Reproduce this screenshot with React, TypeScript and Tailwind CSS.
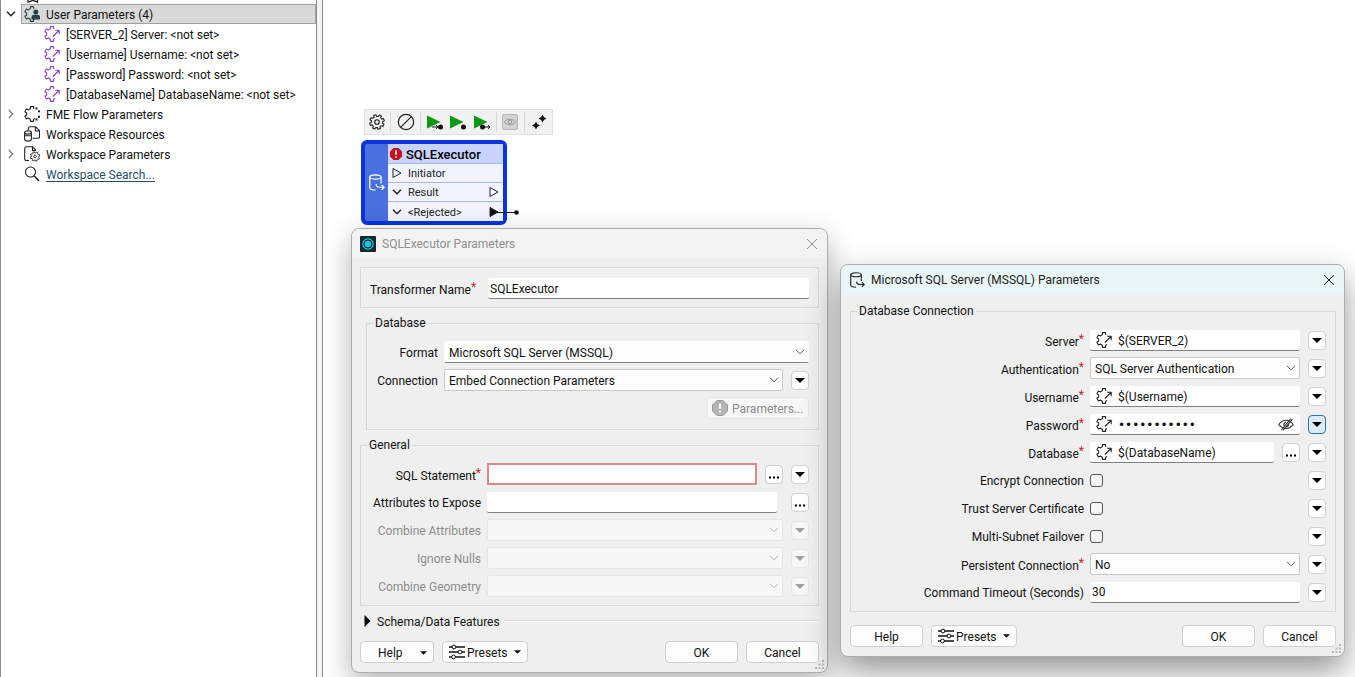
import type { ReactNode } from "react";

const ring = (cx: number, cy: number, ro: number, ri: number, teeth: number, from: number, to: number) => {
  const step = 360 / teeth;
  const pts: string[] = [];
  const at = (r: number, a: number) => {
    const t = (a * Math.PI) / 180;
    pts.push(`${(cx + r * Math.cos(t)).toFixed(2)} ${(cy + r * Math.sin(t)).toFixed(2)}`);
  };
  for (let a = from; a < to - 1; a += step) {
    at(ri, a);
    at(ri, a + step * 0.3);
    at(ro, a + step * 0.4);
    at(ro, a + step * 0.8);
    at(ri, a + step * 0.92);
  }
  return "M" + pts.join("L");
};

const GEAR_FULL = ring(8, 8, 7.4, 5.6, 8, 0, 360) + "Z";
const GEAR_OPEN = ring(8, 8, 7.5, 5.4, 6, 54, 292);
const GEAR_SMALL = ring(11, 10.5, 4.8, 3.7, 8, 0, 360) + "Z";

function Svg({ children, className = "size-4" }: { children: ReactNode; className?: string }) {
  return (
    <svg
      viewBox="0 0 16 16"
      className={`shrink-0 ${className}`}
      fill="none"
      stroke="currentColor"
      strokeWidth="1.1"
      strokeLinejoin="round"
      aria-hidden="true"
    >
      {children}
    </svg>
  );
}

function LinkedGear({ className }: { className?: string }) {
  return (
    <Svg className={className}>
      <path d={GEAR_OPEN} />
      <path d="M8.800 10.500 15 4.500M11.200 4.200H15.200V8.200" />
    </Svg>
  );
}

function DatabaseIcon({ className }: { className?: string }) {
  return (
    <Svg className={className}>
      <ellipse cx="7" cy="2.8" rx="5.3" ry="2" />
      <path d="M1.7 2.8V13c0 1.3 2 2.2 5.3 2.2M12.3 2.8V9M7.5 9.6c.3 2.2 1.6 2.9 3.2 2.9H15M12.8 10.2l2.4 2.3-2.4 2.3" />
    </Svg>
  );
}

function Sliders() {
  return (
    <svg viewBox="0 0 16 16" className="size-4 shrink-0" fill="#fdfdfd" stroke="#111" strokeWidth="1.5" aria-hidden="true">
      <path d="M0 3H16M0 8H16M0 13H16" />
      <g strokeWidth="1">
        <circle cx="5" cy="3" r="1.9" />
        <circle cx="11" cy="8" r="1.9" />
        <circle cx="4.5" cy="13" r="1.9" />
      </g>
    </svg>
  );
}

function Caret({ className = "h-[5px] w-2.5" }: { className?: string }) {
  return (
    <svg viewBox="0 0 10 5" className={className} fill="currentColor" aria-hidden="true">
      <path d="M0 0H10L5 5Z" />
    </svg>
  );
}

function Chevron({ className, bold }: { className?: string; bold?: boolean }) {
  return (
    <svg viewBox="0 0 10 6" className={className} fill="none" stroke="currentColor" strokeWidth={bold ? 1.5 : 1} aria-hidden="true">
      <path d="M1 .8 5 4.8 9 .8" />
    </svg>
  );
}

function MiniButton({ label, dots, disabled, active }: { label: string; dots?: boolean; disabled?: boolean; active?: boolean }) {
  const tone = active
    ? "border-[#2a76ab] bg-[#dcebf8] text-black"
    : disabled
      ? "border-[#e6e6e6] bg-[#f6f6f6] text-[#a0a0a0]"
      : "border-[#d0d0d0] bg-[#fdfdfd] text-black";
  return (
    <button
      type="button"
      aria-label={label}
      disabled={disabled}
      className={`flex h-[19px] w-[18px] shrink-0 items-center justify-center rounded border ${tone}`}
    >
      {dots ? (
        <svg viewBox="0 0 10 10" className="size-2.5" fill="currentColor" aria-hidden="true">
          <path d="M0 7.5h2v2H0zM4 7.5h2v2H4zM8 7.5h2v2H8z" />
        </svg>
      ) : (
        <Caret />
      )}
    </button>
  );
}

function Picker({ id, value, disabled, flat }: { id: string; value: string; disabled?: boolean; flat?: boolean }) {
  const tone = disabled
    ? "border-[#e6e6e6] bg-[#f7f7f7]"
    : flat
      ? "border-transparent border-b-[#808080] bg-[#fdfdfd]"
      : "border-[#c8c8c8] bg-[#fdfdfd]";
  return (
    <div className="relative flex min-w-0 flex-1">
      <select id={id} disabled={disabled} className={`h-[22px] w-full appearance-none rounded-xs border px-1 pt-px ${tone}`}>
        <option>{value}</option>
      </select>
      <Chevron className={`pointer-events-none absolute top-2 right-1 h-1.5 w-2.5 ${disabled ? "text-[#b5b5b5]" : "text-[#555]"}`} />
    </div>
  );
}

const Star = () => <span className="align-[3px] text-[12px] leading-none text-[#c0282d]">*</span>;

function Row({ id, label, required, labelWidth, muted, children }: {
  id: string;
  label: string;
  required?: boolean;
  labelWidth: string;
  muted?: boolean;
  children: ReactNode;
}) {
  return (
    <div className="flex h-7 items-center">
      <label htmlFor={id} className={`shrink-0 pt-0.5 text-right whitespace-nowrap ${labelWidth} ${muted ? "text-[#8c8c8c]" : ""}`}>
        {label}
        {required && <Star />}
      </label>
      <div className="ml-1.5 flex min-w-0 flex-1 items-center gap-2">{children}</div>
    </div>
  );
}

const fieldLook = "h-[21px] w-full min-w-0 rounded-xs border-b border-[#808080] bg-white";

function ParamField({ id, value, secret }: { id: string; value: string; secret?: boolean }) {
  return (
    <div className={`flex flex-1 items-center ${fieldLook}`}>
      <LinkedGear className="ml-1.5 size-4 text-[#222]" />
      <input
        id={id}
        type={secret ? "password" : "text"}
        defaultValue={value}
        className={`ml-1.5 min-w-0 flex-1 bg-transparent pt-0.5 outline-none ${secret ? "font-['DejaVu_Sans',sans-serif]" : ""}`}
      />
      {secret && (
        <Svg className="mr-1.5 size-4 text-[#333]">
          <path d="M.8 8.6C3 5.4 5.600 4.300 8 4.300s5 1.100 7.200 4.300C13 11.200 10.500 12.400 8 12.400S3 11.200.8 8.600Z" />
          <path d="M12.800 2.500 3.500 14M14.300 3.200 5 14.500M10.300 7.200c.8 1.800-.3 3.500-2 3.500M6 9.800C5.400 8 6.400 6.400 8.200 6.300" />
        </Svg>
      )}
    </div>
  );
}

const pushLook = "flex h-[22px] items-center rounded border border-[#d0d0d0] bg-[#fdfdfd]";

function PushButton({ children }: { children: ReactNode }) {
  return (
    <button type="button" className={`w-[73px] justify-center pt-px ${pushLook}`}>
      {children}
    </button>
  );
}

function PresetsButton() {
  return (
    <button type="button" className={`w-[86px] px-1.5 ${pushLook}`}>
      <Sliders />
      <span className="ml-0.5 pt-px">Presets</span>
      <Caret className="ml-auto h-1 w-[7px]" />
    </button>
  );
}

function Grip() {
  return (
    <svg viewBox="0 0 10 10" className="absolute right-0.5 bottom-0.5 size-2.5" fill="#b8b8b8" aria-hidden="true">
      <path d="M7 0h2v2H7zM7 3.500h2v2H7zM7 7h2v2H7zM3.500 3.500h2v2h-2zM3.500 7h2v2h-2zM0 7h2v2H0z" />
    </svg>
  );
}

function CloseIcon() {
  return (
    <svg viewBox="0 0 12 12" className="size-3" fill="none" stroke="currentColor" aria-hidden="true">
      <path d="M1 1 11 11M11 1 1 11" />
    </svg>
  );
}

function TreeRow({ arrow, icon, children, selected, nested }: {
  arrow?: "open" | "closed";
  icon: ReactNode;
  children: ReactNode;
  selected?: boolean;
  nested?: boolean;
}) {
  return (
    <li className="flex h-5 items-center">
      <span className="flex w-5 shrink-0 justify-center">
        {arrow && <Chevron bold className={`h-1.5 w-2.5 ${arrow === "open" ? "text-[#222]" : "-rotate-90 text-[#888]"}`} />}
      </span>
      <div
        className={`flex h-5 flex-1 items-center gap-1.5 border pl-0.5 ${selected ? "border-[#a0a0a0] bg-[#d9d9d9]" : "border-transparent"} ${nested ? "ml-5" : ""}`}
      >
        {icon}
        <span className="pt-0.5">{children}</span>
      </div>
    </li>
  );
}

const userParams = [
  "[SERVER_2] Server: <not set>",
  "[Username] Username: <not set>",
  "[Password] Password: <not set>",
  "[DatabaseName] DatabaseName: <not set>",
];

function Navigator() {
  return (
    <aside className="flex w-[323px] shrink-0 border-r border-l border-[#8c8c8c] bg-[#f3f3f3]">
      <ul className="mr-[5px] flex-1 border-r border-[#8c8c8c] bg-white">
        <li className="flex h-1 items-end overflow-hidden pl-[26px]">
          <svg viewBox="0 0 12 4" className="h-1 w-3" fill="none" stroke="#222" strokeWidth="1.3" aria-hidden="true">
            <path d="M1 0V2L6 .3 10.500 2V0" />
          </svg>
        </li>
        <TreeRow
          arrow="open"
          selected
          icon={
            <Svg className="size-4 text-[#26434b]">
              <path d={GEAR_OPEN} />
              <g fill="currentColor" stroke="none">
                <circle cx="11.800" cy="6" r="2.500" />
                <path d="M7.500 13.500V11c0-1.500 1-2.300 2.500-2.300h3.500c1.500 0 2.500.8 2.500 2.300v2.500Z" />
              </g>
            </Svg>
          }
        >
          User Parameters (4)
        </TreeRow>
        {userParams.map((p) => (
          <TreeRow key={p} nested icon={<LinkedGear className="size-4 text-[#8a3fc0]" />}>
            {p}
          </TreeRow>
        ))}
        <TreeRow
          arrow="closed"
          icon={
            <Svg className="size-4 text-[#222]">
              <path d={GEAR_OPEN} />
              <g fill="currentColor" stroke="none">
                <path d="M11.500 1.500h2v2h-2zM14 4.300h2v2h-2zM14 9.800h2v2h-2zM11.500 12.500h2v2h-2z" />
              </g>
            </Svg>
          }
        >
          FME Flow Parameters
        </TreeRow>
        <TreeRow
          icon={
            <Svg className="size-4 text-[#222]">
              <path d="M4.500 4V2c0-.8.500-1.300 1.300-1.300h5.700l4 4V11c0 .8-.5 1.300-1.300 1.300H8.500M11.300.8V5h4" />
              <ellipse cx="4" cy="6.500" rx="3.400" ry="1.600" />
              <path d="M.6 6.500v6.800c0 1 1.500 1.800 3.400 1.800s3.400-.8 3.400-1.800V6.500M.6 9.800h6.800" />
            </Svg>
          }
        >
          Workspace Resources
        </TreeRow>
        <TreeRow
          arrow="closed"
          icon={
            <Svg className="size-4 text-[#222]">
              <path d="M5 14.500H2.500C1.300 14.500.7 14 .7 12.800V2.500C.7 1.300 1.300.8 2.500.8h6l3.500 3.500M8.500.8v3.700H12" />
              <path d={GEAR_SMALL} strokeWidth=".9" />
              <circle cx="11" cy="10.500" r="1.300" strokeWidth=".9" />
            </Svg>
          }
        >
          Workspace Parameters
        </TreeRow>
        <TreeRow
          icon={
            <Svg className="size-4 text-[#222]">
              <circle cx="6.500" cy="6" r="5" />
              <path d="M10 9.800 15 15" strokeWidth="1.600" />
            </Svg>
          }
        >
          <a href="#search" className="text-[#24505f] underline underline-offset-2">
            Workspace Search...
          </a>
        </TreeRow>
      </ul>
    </aside>
  );
}

function RunIcon({ kind }: { kind: "to" | "here" | "from" }) {
  return (
    <svg viewBox="0 0 18 16" className="h-4 w-[18px]" aria-hidden="true">
      <path d="M1 1.500 14.500 8 1 14.500Z" fill="#0a9a12" />
      {kind === "to" && <path d="M6 13h6M10 11.200 12 13l-2 1.800" stroke="#111" fill="none" />}
      {kind === "from" && <path d="M11 13h6M15 11.200 17 13l-2 1.800" stroke="#111" fill="none" />}
      <circle cx={kind === "from" ? 9.5 : 14.5} cy="13" r="2.500" fill="#111" />
    </svg>
  );
}

function NodeToolbar() {
  const tool = "flex items-center justify-center";
  const bar = <span className="h-5 w-px bg-[#d8d8d8]" />;
  return (
    <div className="absolute top-[109px] left-[41px] flex h-[26px] w-[189px] items-center justify-between border border-[#e0e0e0] bg-[#f1f1f1] px-1">
      <button type="button" aria-label="Parameters" className={tool}>
        <Svg className="size-4 text-[#222]">
          <path d={GEAR_FULL} />
          <circle cx="8" cy="8" r="2.300" />
        </Svg>
      </button>
      {bar}
      <button type="button" aria-label="Disable" className={tool}>
        <Svg className="size-[18px] text-[#222]">
          <circle cx="8" cy="8" r="6.800" />
          <path d="M3.200 12.800 12.800 3.200" />
        </Svg>
      </button>
      {bar}
      <button type="button" aria-label="Run to this" className={tool}><RunIcon kind="to" /></button>
      <button type="button" aria-label="Run just this" className={tool}><RunIcon kind="here" /></button>
      <button type="button" aria-label="Run from this" className={tool}><RunIcon kind="from" /></button>
      {bar}
      <button type="button" aria-label="Inspect" disabled className="flex size-4 items-center justify-center rounded-xs border border-[#b5b5b5] bg-[#d2d2d2]">
        <Svg className="size-3.5 text-[#999]">
          <path d="M1.500 8C4 4 12 4 14.500 8 12 12 4 12 1.500 8Z" />
          <circle cx="8" cy="8" r="2" />
        </Svg>
      </button>
      {bar}
      <button type="button" aria-label="Assist" className={tool}>
        <svg viewBox="0 0 18 18" className="size-[18px]" fill="#111" aria-hidden="true">
          <path d="M12.500 1.500q.8 3.200 4 4-3.200.8-4 4-.8-3.200-4-4 3.200-.8 4-4ZM6 8.500q.8 3.200 4 4-3.200.8-4 4-.8-3.200-4-4 3.200-.8 4-4Z" />
        </svg>
      </button>
    </div>
  );
}

function Port({ filled }: { filled?: boolean }) {
  return (
    <svg viewBox="0 0 10 10" className="size-2.5 shrink-0" fill={filled ? "#111" : "none"} stroke="#222" aria-hidden="true">
      <path d="M1 .5 9 5 1 9.500Z" />
    </svg>
  );
}

function TransformerNode() {
  return (
    <div className="absolute top-[140px] left-[38px] flex h-[85px] w-[146px] rounded-md border-4 border-[#0b33df] bg-[#4a70e0]">
      <div className="flex w-[23px] items-center justify-center">
        <DatabaseIcon className="size-[17px] text-white" />
      </div>
      <div className="flex flex-1 flex-col text-[11px] text-[#222]">
        <div className="flex h-5 items-center gap-1 border-b border-[#aab8e0] bg-[#c9d3fc] pl-0.5 text-[13px] text-black">
          <svg viewBox="0 0 12 12" className="size-3" aria-hidden="true">
            <path d="M3.500 0h5L12 3.500v5L8.500 12h-5L0 8.500v-5Z" fill="#c3161c" />
            <path d="M6 2.300v4.500M6 8.300v1.500" stroke="#fff" strokeWidth="1.500" />
          </svg>
          <span className="pt-0.5 font-medium">SQLExecutor</span>
        </div>
        <div className="flex h-[19px] items-center gap-1.5 border-b border-[#aab8e0] bg-[#f1f4ff] px-1">
          <Port />
          <span className="flex-1 pt-0.5">Initiator</span>
        </div>
        <div className="flex h-[19px] items-center gap-1.5 border-b border-[#aab8e0] bg-[#f1f4ff] px-1">
          <Chevron bold className="h-1.5 w-2.5" />
          <span className="flex-1 pt-0.5">Result</span>
          <Port />
        </div>
        <div className="flex h-[19px] items-center gap-1.5 bg-[#f1f4ff] px-1">
          <Chevron bold className="h-1.5 w-2.5" />
          <span className="flex-1 pt-0.5">&lt;Rejected&gt;</span>
          <Port filled />
        </div>
      </div>
      <svg viewBox="0 0 24 6" className="absolute right-[-16px] bottom-[6px] h-1.5 w-6" aria-hidden="true">
        <path d="M0 3.500H22" stroke="#111" />
        <circle cx="21.500" cy="3.500" r="2.300" fill="#111" />
      </svg>
    </div>
  );
}

const windowLook = "absolute flex flex-col rounded-lg border border-[#adadad] bg-[#efefef]";
const groupLook = "min-w-0 border border-[#d9d9d9]";
const legendLook = "ml-1.5 px-0.5 leading-4";

function TransformerDialog() {
  return (
    <section className={`top-[228px] left-[28px] w-[477px] shadow-[0_10px_28px_rgba(0,0,0,0.3)] ${windowLook}`}>
      <header className="flex h-[29px] items-center rounded-t-lg bg-[#f3f3f3] pr-[9px] pl-2 text-[#8f8f8f]">
        <svg viewBox="0 0 16 16" className="size-4" aria-hidden="true">
          <rect width="16" height="16" rx="1" fill="#102a33" />
          <circle cx="8" cy="8" r="5.200" fill="none" stroke="#25c4dc" strokeWidth="1.200" />
          <circle cx="8" cy="8" r="3.300" fill="#25c4dc" />
        </svg>
        <h2 className="ml-1.5 flex-1">SQLExecutor Parameters</h2>
        <button type="button" aria-label="Close"><CloseIcon /></button>
      </header>
      <form className="flex flex-col pt-[9px] pr-2 pb-[9px] pl-2">
        <div className={`flex h-[41px] items-center px-[9px] pt-0.5 ${groupLook}`}>
          <label htmlFor="tname" className="w-[118px] shrink-0 pt-0.5 whitespace-nowrap">Transformer Name<Star /></label>
          <input id="tname" defaultValue="SQLExecutor" className={`px-0.5 pt-px ${fieldLook}`} />
        </div>
        <fieldset className={`mt-[7px] ml-1.5 pt-[7px] pr-[9px] pb-[7px] ${groupLook}`}>
          <legend className={legendLook}>Database</legend>
          <Row id="format" label="Format" labelWidth="w-[71px]">
            <Picker id="format" value="Microsoft SQL Server (MSSQL)" flat />
          </Row>
          <Row id="conn" label="Connection" labelWidth="w-[71px]">
            <Picker id="conn" value="Embed Connection Parameters" />
            <MiniButton label="Connection options" />
          </Row>
          <div className="flex h-7 items-center justify-end">
            <button type="button" disabled className="flex h-[22px] w-[102px] items-center gap-1 rounded border border-[#e8e8e8] bg-[#f6f6f6] pl-1 text-[#8c8c8c]">
              <svg viewBox="0 0 16 16" className="size-4" aria-hidden="true">
                <path d="M5 .5h6L15.500 5v6L11 15.500H5L.5 11V5Z" fill="#b5b5b5" stroke="#999" />
                <path d="M8 3.500v5.500M8 10.500v2" stroke="#fff" strokeWidth="1.800" />
              </svg>
              <span className="pt-0.5">Parameters...</span>
            </button>
          </div>
        </fieldset>
        <fieldset className={`mt-[7px] pt-[7px] pr-[9px] pb-[5px] ${groupLook}`}>
          <legend className={legendLook}>General</legend>
          <Row id="sql" label="SQL Statement" required labelWidth="w-[120px]">
            <input id="sql" className="h-[22px] min-w-0 flex-1 border-2 border-[#d98a8a] bg-white outline-none" />
            <MiniButton label="Edit SQL" dots />
            <MiniButton label="SQL options" />
          </Row>
          <Row id="expose" label="Attributes to Expose" labelWidth="w-[120px]">
            <input id="expose" className={`mr-1.5 ${fieldLook}`} />
            <MiniButton label="Choose attributes" dots />
          </Row>
          {["Combine Attributes", "Ignore Nulls", "Combine Geometry"].map((name) => (
            <Row key={name} id={name} label={name} muted labelWidth="w-[120px]">
              <Picker id={name} value="" disabled />
              <MiniButton label={`${name} options`} disabled />
            </Row>
          ))}
        </fieldset>
        <div className="mt-[7px] flex h-4 items-center pl-1">
          <button type="button" className="flex items-center gap-1.5">
            <svg viewBox="0 0 7 12" className="h-3 w-[7px]" aria-hidden="true">
              <path d="M.5 0 6.500 6 .5 12Z" />
            </svg>
            <span className="pt-0.5">Schema/Data Features</span>
          </button>
          <span className="ml-1 h-0.5 flex-1 border-t border-[#dcdcdc] bg-white" />
        </div>
        <div className="mt-3 flex gap-2">
          <button type="button" className={`w-[74px] pt-px pr-1.5 pl-[17px] ${pushLook}`}>
            Help
            <Caret className="ml-auto h-1 w-[7px]" />
          </button>
          <PresetsButton />
          <span className="flex-1" />
          <PushButton>OK</PushButton>
          <PushButton>Cancel</PushButton>
        </div>
      </form>
      <Grip />
    </section>
  );
}

function ConnectionDialog() {
  const w = "w-[233px]";
  return (
    <section className={`top-[264px] left-[517px] w-[505px] shadow-[0_14px_32px_rgba(0,0,0,0.42)] ${windowLook}`}>
      <header className="flex h-[30px] items-center rounded-t-lg bg-[#e9f5f6] pr-[9px] pl-2 text-[#222]">
        <DatabaseIcon className="size-4" />
        <h2 className="ml-1.5 flex-1">Microsoft SQL Server (MSSQL) Parameters</h2>
        <button type="button" aria-label="Close"><CloseIcon /></button>
      </header>
      <form className="flex flex-col pt-2 pr-2 pb-[9px] pl-[9px]">
        <fieldset className={`pt-[7px] pr-[9px] pb-[5px] ${groupLook}`}>
          <legend className={legendLook}>Database Connection</legend>
          <Row id="server" label="Server" required labelWidth={w}>
            <ParamField id="server" value="$(SERVER_2)" />
            <MiniButton label="Server options" />
          </Row>
          <Row id="auth" label="Authentication" required labelWidth={w}>
            <Picker id="auth" value="SQL Server Authentication" />
            <MiniButton label="Authentication options" />
          </Row>
          <Row id="user" label="Username" required labelWidth={w}>
            <ParamField id="user" value="$(Username)" />
            <MiniButton label="Username options" />
          </Row>
          <Row id="pass" label="Password" required labelWidth={w}>
            <ParamField id="pass" value="$(Password)" secret />
            <MiniButton label="Password options" active />
          </Row>
          <Row id="db" label="Database" required labelWidth={w}>
            <ParamField id="db" value="$(DatabaseName)" />
            <MiniButton label="Browse databases" dots />
            <MiniButton label="Database options" />
          </Row>
          {["Encrypt Connection", "Trust Server Certificate", "Multi-Subnet Failover"].map((name) => (
            <Row key={name} id={name} label={name} labelWidth={w}>
              <input id={name} type="checkbox" className="size-[13px] appearance-none rounded-[3px] border border-[#555] bg-[#f5f5f5]" />
              <span className="flex-1" />
              <MiniButton label={`${name} options`} />
            </Row>
          ))}
          <Row id="persist" label="Persistent Connection" required labelWidth={w}>
            <Picker id="persist" value="No" />
            <MiniButton label="Persistent connection options" />
          </Row>
          <Row id="timeout" label="Command Timeout (Seconds)" labelWidth={w}>
            <input id="timeout" defaultValue="30" className={`px-0.5 pt-px ${fieldLook}`} />
            <MiniButton label="Timeout options" />
          </Row>
        </fieldset>
        <div className="mt-[13px] flex gap-2">
          <PushButton>Help</PushButton>
          <PresetsButton />
          <span className="flex-1" />
          <PushButton>OK</PushButton>
          <PushButton>Cancel</PushButton>
        </div>
      </form>
      <Grip />
    </section>
  );
}

export default function App() {
  return (
    <div className="flex h-screen overflow-hidden bg-white font-['Roboto',sans-serif] text-[12px] leading-4 text-[#111]">
      <Navigator />
      <main className="relative min-w-0 flex-1">
        <NodeToolbar />
        <TransformerNode />
        <TransformerDialog />
        <ConnectionDialog />
      </main>
    </div>
  );
}
